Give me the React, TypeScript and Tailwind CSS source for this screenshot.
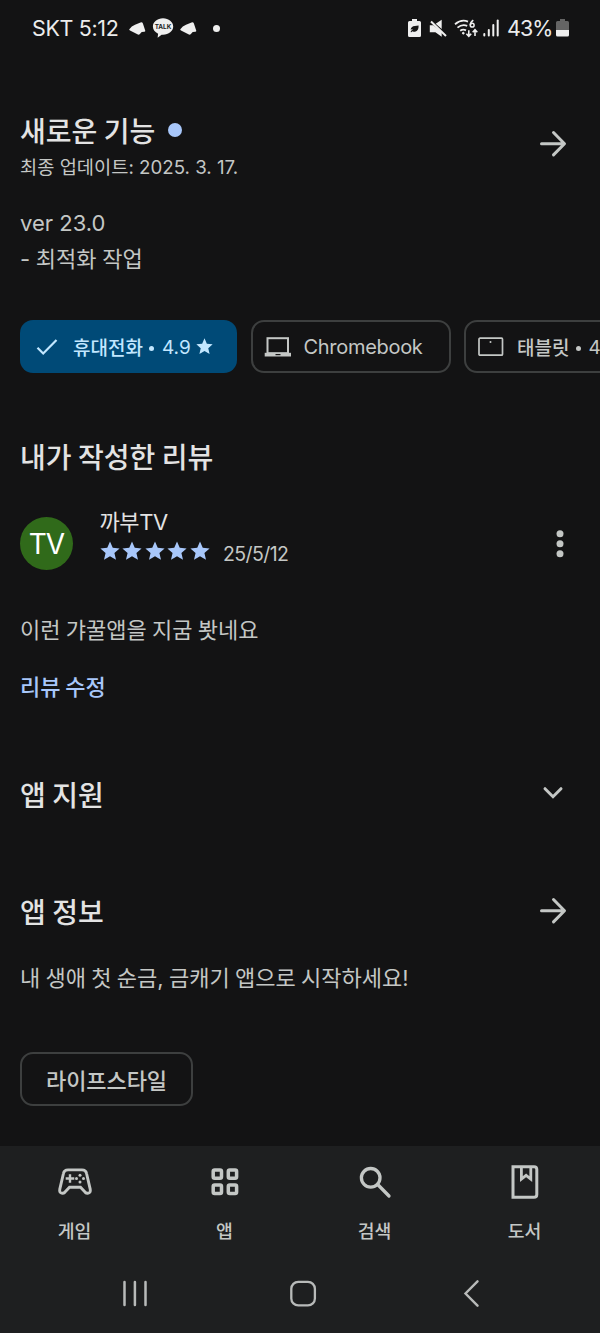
import type { ReactNode } from "react"

const STAR_PATH =
  "M12 0.500l3.300 7.700 8.200.7-6.200 5.500 1.900 8.200L12 18.300l-7.200 4.300 1.900-8.200L.5 8.900l8.200-.7z"

function Star({ className }: { className: string }) {
  return (
    <svg viewBox="0 0 24 24" className={className} fill="currentColor">
      <path d={STAR_PATH} />
    </svg>
  )
}

function ArrowIcon() {
  return (
    <svg
      width="28"
      height="28"
      viewBox="0 0 28 28"
      fill="none"
      stroke="currentColor"
      strokeWidth="3"
      strokeLinecap="round"
      strokeLinejoin="round"
      className="text-[#c4c7c5]"
    >
      <path d="M2.500 13.700h22M14.500 2.500l11 11.200-11 11.200" />
    </svg>
  )
}

function CloudIcon() {
  return (
    <svg width="17" height="13" viewBox="0 0 17 13" fill="#efefef">
      <path d="M.3 7.200Q2.500 4 6 2.800L11.500.4q1.800-.6 2.400 1.200L16.200 8.600q.3 1.200-.9 1.200l-2.600.2-2 2.200q-.8.700-1.800.4L1 8.500Q0 8 .3 7.200z" />
    </svg>
  )
}

function StatusBar() {
  return (
    <div className="flex h-14 items-center pl-8 text-[21.500px] leading-7 text-[#ececec]">
      <span className="w-[97px] whitespace-nowrap tracking-[-0.350px]">SKT 5:12</span>
      <CloudIcon />
      <svg width="22" height="20" viewBox="0 0 22 20" className="ml-[6px]">
        <path
          d="M11 0.300c5.700 0 10.200 3.700 10.200 8.300s-4.500 8.200-10.200 8.200l-1.400-.1-4 3 .5-4C2.900 14.300.9 11.600.9 8.600.9 4 5.300.3 11 .3z"
          fill="#efefef"
        />
        <text x="11" y="11.300" textAnchor="middle" fontSize="6.400" fontWeight="700" fill="#1c1c1c">
          TALK
        </text>
      </svg>
      <span className="ml-[6px]">
        <CloudIcon />
      </span>
      <span className="ml-[16px] size-[7px] rounded-full bg-[#efefef]" />

      <div className="ml-auto mr-[31px] flex items-center">
        {/* battery saver */}
        <svg width="13" height="18" viewBox="0 0 13 18">
          <path d="M4 0h5v2h2.500q1.500 0 1.500 1.500v13q0 1.500-1.500 1.500h-10Q0 18 0 16.500v-13Q0 2 1.500 2H4z" fill="#efefef" />
          <path d="M2.500 13q1-2 2.500-3-1.500.2-2.300 1 .2-3.700 4.200-4L10.600 6.500q.2 5.500-3.600 6.200-1.500.2-2.400-.5-.8.300-1.300 1z" fill="#171717" />
        </svg>
        {/* sound off */}
        <svg width="18" height="19" viewBox="0 0 18 19" className="ml-[8px]">
          <path d="M.8 6.200h3.500L12.700 13v4.800L6.400 13.200H.8z" fill="#efefef" />
          <path d="M6.700 4.700l6-4v9.200z" fill="#efefef" />
          <path d="M2 2.500l15 14.500" stroke="#efefef" strokeWidth="2" />
        </svg>
        {/* wifi 6 */}
        <svg width="25" height="19" viewBox="0 0 25 19" fill="none" stroke="#efefef" strokeWidth="1.800" className="ml-[7px]">
          <path d="M1 5.200Q7.500-.2 14 2.600M3.500 8.600q4.500-3.700 9.700-1.800M6.200 11.800q2.800-2 5.800-.4" />
          <circle cx="9.300" cy="14.200" r=".9" fill="#efefef" strokeWidth="1" />
          <path d="M19.300 1.200q-3 2-3 5M14.800 11.200v5.800M12.400 14.800l2.400 2.600 2.400-2.600M21 17v-5.800M18.700 13.300L21 10.700l2.300 2.600" strokeWidth="1.600" />
          <circle cx="18.200" cy="6.200" r="1.900" strokeWidth="1.500" />
        </svg>
        <svg width="17" height="18" viewBox="0 0 17 18" fill="#efefef" className="ml-[4px]">
          <rect x="0.300" y="14" width="2" height="3.500" rx="1" />
          <rect x="4.800" y="10" width="2" height="7.500" rx="1" />
          <rect x="9.300" y="5" width="2" height="12.500" rx="1" />
          <rect x="13.700" y="0.500" width="2" height="17" rx="1" />
        </svg>
        <span className="ml-[7px] w-[49px] whitespace-nowrap tracking-[-0.9px]">43%</span>
        <svg width="13" height="18" viewBox="0 0 13 18">
          <path d="M4 0h5v2h2.500q1.500 0 1.500 1.500V11H0V3.500Q0 2 1.500 2H4z" fill="#646464" />
          <path d="M0 11h13v5q0 1.500-1.500 1.500h-10Q0 17.500 0 16z" fill="#efefef" />
        </svg>
      </div>
    </div>
  )
}

function SectionTitle({ children }: { children: ReactNode }) {
  return (
    <h2 className="whitespace-nowrap pt-[3px] text-[28px] font-medium leading-[33px] [word-spacing:-1px] text-[#e3e3e3]">
      {children}
    </h2>
  )
}

function WhatsNew() {
  return (
    <section className="px-5 pt-[57px]">
      <div className="flex items-start justify-between">
        <div>
          <div className="flex items-center">
            <SectionTitle>새로운 기능</SectionTitle>
            <span className="mb-[3px] ml-[13px] size-[14px] rounded-full bg-[#a8c7fa]" />
          </div>
          <p className="text-[18.700px] leading-[38px] text-[#c4c7c5]">
            최종 업데이트: 2025. 3. 17.
          </p>
        </div>
        <div className="mr-[13px] mt-[17px]">
          <ArrowIcon />
        </div>
      </div>
      <div className="mt-[18px] text-[22px] leading-9 text-[#c4c7c5]">
        <p>ver 23.0</p>
        <p className="[word-spacing:-0.500px]">- 최적화 작업</p>
      </div>
    </section>
  )
}

function DeviceChips() {
  return (
    <div className="mt-[43px] flex h-[53px] gap-[13.500px] overflow-hidden whitespace-nowrap pl-5 text-[19px] font-medium text-[#c4c7c5]">
      <button className="flex w-[217px] shrink-0 items-center rounded-[13px] bg-[#004a77] pl-4 text-[#c2e7ff]">
        <svg width="22" height="18" viewBox="0 0 22 18" fill="none" stroke="currentColor" strokeWidth="2.200">
          <path d="M1.500 9.800l5.700 5.700L20.500 2" />
        </svg>
        <span className="ml-[15px] mt-[6px]">휴대전화</span>
        <span className="ml-[6px] mt-[4px] size-[5px] rounded-full bg-current" />
        <span className="ml-[8px] mt-[3px] font-normal">4.9</span>
        <Star className="ml-[5px] size-[17px]" />
      </button>
      <button className="flex w-[200px] shrink-0 items-center rounded-[13px] border-2 border-[#3d3f3f] pl-[11px]">
        <svg width="28" height="20" viewBox="0 0 28 20">
          <rect x="3.500" y="1.200" width="20.500" height="15" fill="none" stroke="currentColor" strokeWidth="2" />
          <path d="M.7 15.800h26.300v3.700H.7z" fill="currentColor" />
          <path d="M11.500 17h5v1.200h-5z" fill="#131314" />
        </svg>
        <span className="ml-[12px] text-[20px] font-normal tracking-[-0.300px]">Chromebook</span>
      </button>
      <button className="flex w-[220px] shrink-0 items-center rounded-[13px] border-2 border-[#3d3f3f] pl-[12px]">
        <svg width="26" height="20" viewBox="0 0 26 20">
          <rect x="1" y="1.200" width="23.500" height="17" rx="1" fill="none" stroke="currentColor" strokeWidth="1.700" />
          <circle cx="12.500" cy="5" r="1" fill="currentColor" />
        </svg>
        <span className="ml-[13px] mt-[6px]">태블릿</span>
        <span className="ml-[7px] mt-[4px] size-[5px] rounded-full bg-current" />
        <span className="ml-[7px] mt-[3px] font-normal">4.7</span>
      </button>
    </div>
  )
}

function MyReview() {
  return (
    <section className="mt-[66px] px-5">
      <SectionTitle>내가 작성한 리뷰</SectionTitle>
      <div className="mt-8 flex h-16 items-start">
        <div className="mt-[10px] flex size-[53px] items-center justify-center rounded-full bg-[#306a1a] text-[28px] tracking-[-1px] text-white">
          TV
        </div>
        <div className="ml-[26.500px] whitespace-nowrap">
          <p className="text-[22px] leading-[30px] tracking-[-0.4px] text-[#e3e3e3]">까부TV</p>
          <div className="flex h-7 items-center">
            <div className="flex gap-[2.500px] text-[#a8c7fa]">
              {[1, 2, 3, 4, 5].map((n) => (
                <Star key={n} className="size-[20px]" />
              ))}
            </div>
            <span className="ml-[13.500px] mt-[5px] text-[19.500px] leading-7 tracking-[-0.6px] text-[#c4c7c5]">
              25/5/12
            </span>
          </div>
        </div>
        <svg width="8" height="30" viewBox="0 0 8 30" fill="#c4c7c5" className="ml-auto mr-4 mt-[22px]">
          <circle cx="4" cy="4.700" r="3.500" />
          <circle cx="4" cy="14.700" r="3.500" />
          <circle cx="4" cy="24.700" r="3.500" />
        </svg>
      </div>
      <p className="mt-10 pt-[2px] text-[22px] leading-[34px] text-[#c4c7c5] [word-spacing:-0.900px]">
        이런 갸꿀앱을 지굼 봣네요
      </p>
      <button className="mt-[21px] block pt-[2px] text-[22px] font-medium leading-[34px] text-[#a8c7fa] [word-spacing:-1px]">
        리뷰 수정
      </button>
    </section>
  )
}

function AppDetails() {
  return (
    <section className="px-5">
      <div className="mt-[73px] flex items-start justify-between">
        <SectionTitle>앱 지원</SectionTitle>
        <svg
          width="22"
          height="14"
          viewBox="0 0 22 14"
          fill="none"
          stroke="#c4c7c5"
          strokeWidth="3"
          strokeLinecap="round"
          className="mr-[16px] mt-[9px]"
        >
          <path d="M3 2.700l8 8 8-8" />
        </svg>
      </div>
      <div className="mt-[81px] flex items-start justify-between">
        <SectionTitle>앱 정보</SectionTitle>
        <div className="mr-[13px] mt-[3px]">
          <ArrowIcon />
        </div>
      </div>
      <p className="mt-[29px] pt-[3px] text-[22px] leading-[33px] text-[#c4c7c5] [word-spacing:-0.900px]">
        내 생애 첫 순금, 금캐기 앱으로 시작하세요!
      </p>
      <button className="mt-[57px] flex h-[54px] w-[173px] items-center justify-center rounded-[13px] border-2 border-[#3d3f3f] pt-[5px] text-[22px] font-medium tracking-[-0.100px] text-[#c4c7c5]">
        라이프스타일
      </button>
    </section>
  )
}

const tabs = [
  {
    label: "게임",
    icon: (
      <>
        <path
          d="M11 5.900h14q3.800 0 4.500 3.400l3.700 15.800q.8 4-2.400 4.200-1.500.1-2.800-1.200L23.500 23.300h-11L8 28.100q-1.300 1.300-2.800 1.200-3.200-.2-2.400-4.200L6.500 9.300Q7.200 5.900 11 5.900z"
          fill="none"
          stroke="currentColor"
          strokeWidth="2.900"
        />
        <path d="M8.700 14.500h8.600M13 10.200v8.600" stroke="currentColor" strokeWidth="2.400" />
        <circle cx="23" cy="11.200" r="1.500" />
        <circle cx="23" cy="18" r="1.500" />
        <circle cx="19.500" cy="14.600" r="1.500" />
        <circle cx="26.500" cy="14.600" r="1.500" />
      </>
    ),
  },
  {
    label: "앱",
    icon: (
      <g fill="none" stroke="currentColor" strokeWidth="3.500">
        <rect x="6.200" y="6" width="8.300" height="8.300" rx="1.500" />
        <rect x="21.300" y="6" width="8.300" height="8.300" rx="1.500" />
        <rect x="6.200" y="21.100" width="8.300" height="8.300" rx="1.500" />
        <rect x="21.300" y="21.100" width="8.300" height="8.300" rx="1.500" />
      </g>
    ),
  },
  {
    label: "검색",
    icon: (
      <g fill="none" stroke="currentColor" strokeWidth="3.300" strokeLinecap="round">
        <circle cx="13.700" cy="13.800" r="9.300" />
        <path d="M20.700 20.500l11.300 11.500" />
      </g>
    ),
  },
  {
    label: "도서",
    icon: (
      <g fill="none" stroke="currentColor" strokeWidth="3">
        <path d="M6 2.700h21q2.800 0 2.800 2.800v25q0 2.800-2.800 2.800H6z" />
        <path d="M14.400 2.700v12.400l4.700-3.800 4.700 3.800V2.700" strokeWidth="2.800" />
      </g>
    ),
  },
]

function BottomNav() {
  return (
    <nav className="mt-auto h-[187px] bg-[#1e1f20] text-[#c4c7c5]">
      <div className="grid grid-cols-4">
        {tabs.map((tab) => (
          <div key={tab.label} className="flex flex-col items-center pt-[18px]">
            <svg width="36" height="36" viewBox="0 0 36 36" fill="currentColor">
              {tab.icon}
            </svg>
            <span className="mr-px mt-[18px] text-[18.300px] font-medium leading-[27px]">{tab.label}</span>
          </div>
        ))}
      </div>
      <div className="mt-[33px] flex h-[30px] items-center pl-[121px] text-[#b8bab9]">
        <svg width="28" height="28" viewBox="0 0 28 28" stroke="currentColor" strokeWidth="2.500" strokeLinecap="round">
          <path d="M3.500 3v23M13.900 3v23M24.500 3v23" />
        </svg>
        <svg width="28" height="28" viewBox="0 0 28 28" fill="none" stroke="currentColor" strokeWidth="2.300" className="ml-[140px]">
          <rect x="2.300" y="2.800" width="23.600" height="23.600" rx="7" />
        </svg>
        <svg width="18" height="28" viewBox="0 0 18 28" fill="none" stroke="currentColor" strokeWidth="2.400" strokeLinecap="round" className="ml-[145px]">
          <path d="M15.500 2.300L3.500 14.500l12 12.200" />
        </svg>
      </div>
    </nav>
  )
}

export default function App() {
  return (
    <div className="flex h-[1333px] w-[600px] flex-col overflow-hidden bg-[#131314] font-['Inter','Noto_Sans_CJK_KR',sans-serif]">
      <StatusBar />
      <WhatsNew />
      <DeviceChips />
      <MyReview />
      <AppDetails />
      <BottomNav />
    </div>
  )
}
